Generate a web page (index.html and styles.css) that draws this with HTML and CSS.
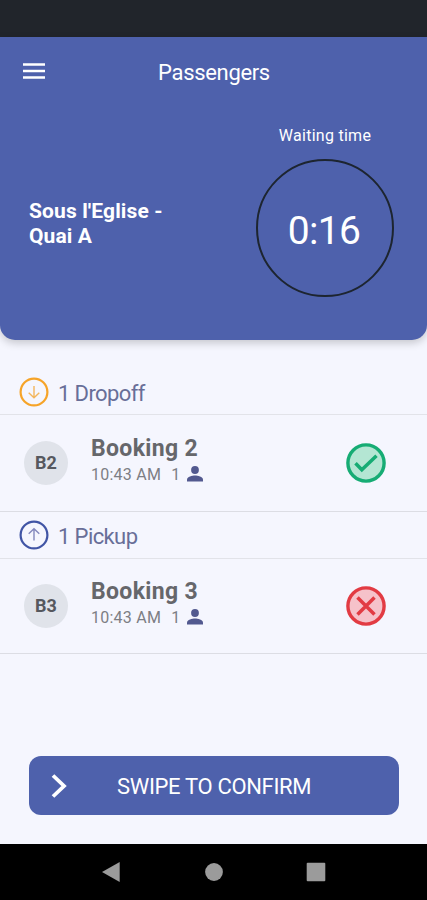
FILE: index.html
```html
<!DOCTYPE html>
<html lang="en">
<head>
    <meta charset="UTF-8">
    <meta name="viewport" content="width=device-width, initial-scale=1.0">
    <title>Passengers</title>
    <link rel="stylesheet" href="styles.css">
</head>
<body>
    <div class="status-bar"></div>

    <header class="header">
        <div class="toolbar">
            <svg class="menu-icon" width="22" height="16" viewBox="0 0 22 16">
                <path d="M0 1.5h22M0 8h22M0 14.5h22" stroke="#fff" stroke-width="2.6"/>
            </svg>
            <h1>Passengers</h1>
        </div>
        <div class="stop-info">
            <h2>Sous l'Eglise -<br>Quai A</h2>
            <div class="waiting">
                <span class="waiting-label">Waiting time</span>
                <div class="timer"><span>0:16</span></div>
            </div>
        </div>
    </header>

    <main class="content">
        <div class="group-title dropoff">
            <svg width="30" height="30" viewBox="0 0 30 30" fill="none">
                <circle cx="15" cy="15" r="13.4" stroke="#f6a429" stroke-width="2.2"/>
                <path d="M15 9v11.5M9.7 15.7l5.3 5 5.3-5" stroke="#f3b65e" stroke-width="1.4"/>
            </svg>
            <span>1 Dropoff</span>
        </div>
        <div class="booking">
            <div class="avatar">B2</div>
            <div class="details">
                <h3>Booking 2</h3>
                <p>
                    <span>10:43 AM</span>
                    <span class="count">1</span>
                    <svg width="16" height="16" viewBox="0 0 16 16" fill="#52598f">
                        <circle cx="8" cy="4" r="3.9"/>
                        <path d="M0 15.5v-2c0-2.7 5.3-4 8-4s8 1.3 8 4v2z"/>
                    </svg>
                </p>
            </div>
            <svg class="state" width="40" height="40" viewBox="0 0 40 40">
                <circle cx="20" cy="20" r="18.1" fill="#b4e6d3" stroke="#16ac74" stroke-width="3.4"/>
                <path d="M9.5 20.3l6.3 6.5L30.5 12.8" fill="none" stroke="#16ac74" stroke-width="3.5"/>
            </svg>
        </div>

        <div class="group-title pickup">
            <svg width="30" height="30" viewBox="0 0 30 30" fill="none">
                <circle cx="15" cy="15" r="13.4" stroke="#4155a5" stroke-width="2.2"/>
                <path d="M15 20.5V9M9.7 13.8L15 8.8l5.3 5" stroke="#8388bd" stroke-width="1.4"/>
            </svg>
            <span>1 Pickup</span>
        </div>
        <div class="booking">
            <div class="avatar">B3</div>
            <div class="details">
                <h3>Booking 3</h3>
                <p>
                    <span>10:43 AM</span>
                    <span class="count">1</span>
                    <svg width="16" height="16" viewBox="0 0 16 16" fill="#52598f">
                        <circle cx="8" cy="4" r="3.9"/>
                        <path d="M0 15.5v-2c0-2.7 5.3-4 8-4s8 1.3 8 4v2z"/>
                    </svg>
                </p>
            </div>
            <svg class="state" width="40" height="40" viewBox="0 0 40 40">
                <circle cx="20" cy="20" r="18.1" fill="#f6c2ca" stroke="#e23b43" stroke-width="3.4"/>
                <path d="M11.5 11.5l17 17M28.5 11.5l-17 17" stroke="#e23b43" stroke-width="3.5"/>
            </svg>
        </div>

        <div class="swipe-button">
            <svg width="16" height="24" viewBox="0 0 16 24" fill="none">
                <path d="M2 1.5L13 12 2 22.5" stroke="#fff" stroke-width="3.8"/>
            </svg>
            <span>SWIPE TO CONFIRM</span>
        </div>
    </main>

    <nav class="nav-bar">
        <svg width="20" height="20" viewBox="0 0 20 20" fill="#9b9b9b"><path d="M0 10L17.7 0v20z"/></svg>
        <svg width="20" height="20" viewBox="0 0 20 20" fill="#9b9b9b"><circle cx="10" cy="10" r="8.9"/></svg>
        <svg width="20" height="20" viewBox="0 0 20 20" fill="#9b9b9b"><rect x="0.7" y="0.8" width="18.6" height="18.4" rx="1"/></svg>
    </nav>
</body>
</html>
```

FILE: styles.css
```css
* { box-sizing: border-box; }
body {
    margin: 0;
    height: 900px;
    display: flex;
    flex-direction: column;
    overflow: hidden;
    font-family: Roboto, "Liberation Sans", sans-serif;
    background: #f5f6fe;
}
h1, h2, h3, p { margin: 0; }
svg { flex: none; display: block; }

.status-bar {
    height: 37px;
    background: #21252b;
}

/* blue panel with the stop name and timer */
.header {
    height: 303px;
    background: #4e61ac;
    color: #fff;
    border-radius: 0 0 15px 15px;
    box-shadow: 0 3px 9px rgba(0,0,0,0.2);
}
.toolbar {
    height: 70px;
    display: grid;
    grid-template-columns: 45px 1fr 44px;
    align-items: center;
}
.menu-icon { margin-left: 23px; margin-top: -3px; }
.toolbar h1 {
    text-align: center;
    font-size: 22px;
    font-weight: 400;
    letter-spacing: -0.33px;
}
.stop-info {
    display: flex;
    justify-content: space-between;
    padding: 0 33px 0 29px;
}
.stop-info h2 {
    margin-top: 92px;
    font-size: 21px;
    line-height: 25px;
    font-weight: 700;
    letter-spacing: 0.12px;
}
.waiting {
    display: flex;
    flex-direction: column;
    align-items: center;
    padding-top: 19px;
}
.waiting-label {
    font-size: 16px;
    line-height: 20px;
    letter-spacing: 0.27px;
}
.timer {
    width: 138px;
    height: 138px;
    margin-top: 13px;
    display: flex;
    align-items: center;
    justify-content: center;
    border: 2px solid #1d2530;
    border-radius: 50%;
    font-size: 39px;
    letter-spacing: -0.7px;
}
.timer span { margin: 5px 2px 0 0; }

.content {
    height: 504px;
    display: flex;
    flex-direction: column;
}
.group-title {
    height: 47px;
    display: flex;
    align-items: center;
    gap: 9px;
    padding: 0 19px;
    border-bottom: 1px solid #e2e3e9;
    color: #686e98;
    font-size: 22px;
    letter-spacing: -0.6px;
}
.group-title span { padding-top: 3px; }
.dropoff {
    margin-top: 28px;
    padding-top: 1px;
}
.booking {
    height: 97px;
    display: flex;
    align-items: center;
    padding: 0 41px 0 24px;
    border-bottom: 1px solid #dcdde4;
}
.pickup + .booking { height: 95px; }
.avatar {
    width: 44px;
    height: 44px;
    border-radius: 50%;
    background: #e0e3ea;
    color: #56585e;
    font-size: 18px;
    font-weight: 700;
    line-height: 44px;
    text-align: center;
}
.details {
    margin-left: 23px;
    padding-bottom: 4px;
}
.details h3 {
    color: #66676b;
    font-size: 23px;
    line-height: 28px;
    font-weight: 700;
    letter-spacing: 0.33px;
}
.details p {
    display: flex;
    align-items: center;
    color: #7d7e84;
    font-size: 16px;
    line-height: 24px;
    letter-spacing: 0.25px;
}
.details svg { margin-top: -2px; }
.count { margin: 0 7px 0 10px; }
.state { margin-left: auto; }

.swipe-button {
    height: 59px;
    margin: auto 28px 29px 29px;
    padding-left: 22px;
    display: flex;
    align-items: center;
    border-radius: 12px;
    background: #4e61ac;
    color: #fff;
    font-size: 22px;
    letter-spacing: -0.33px;
}
.swipe-button span {
    margin-left: 50px;
    padding-top: 2px;
}

.nav-bar {
    height: 56px;
    padding-left: 102px;
    display: flex;
    align-items: center;
    gap: 82px;
    background: #000;
}
```
